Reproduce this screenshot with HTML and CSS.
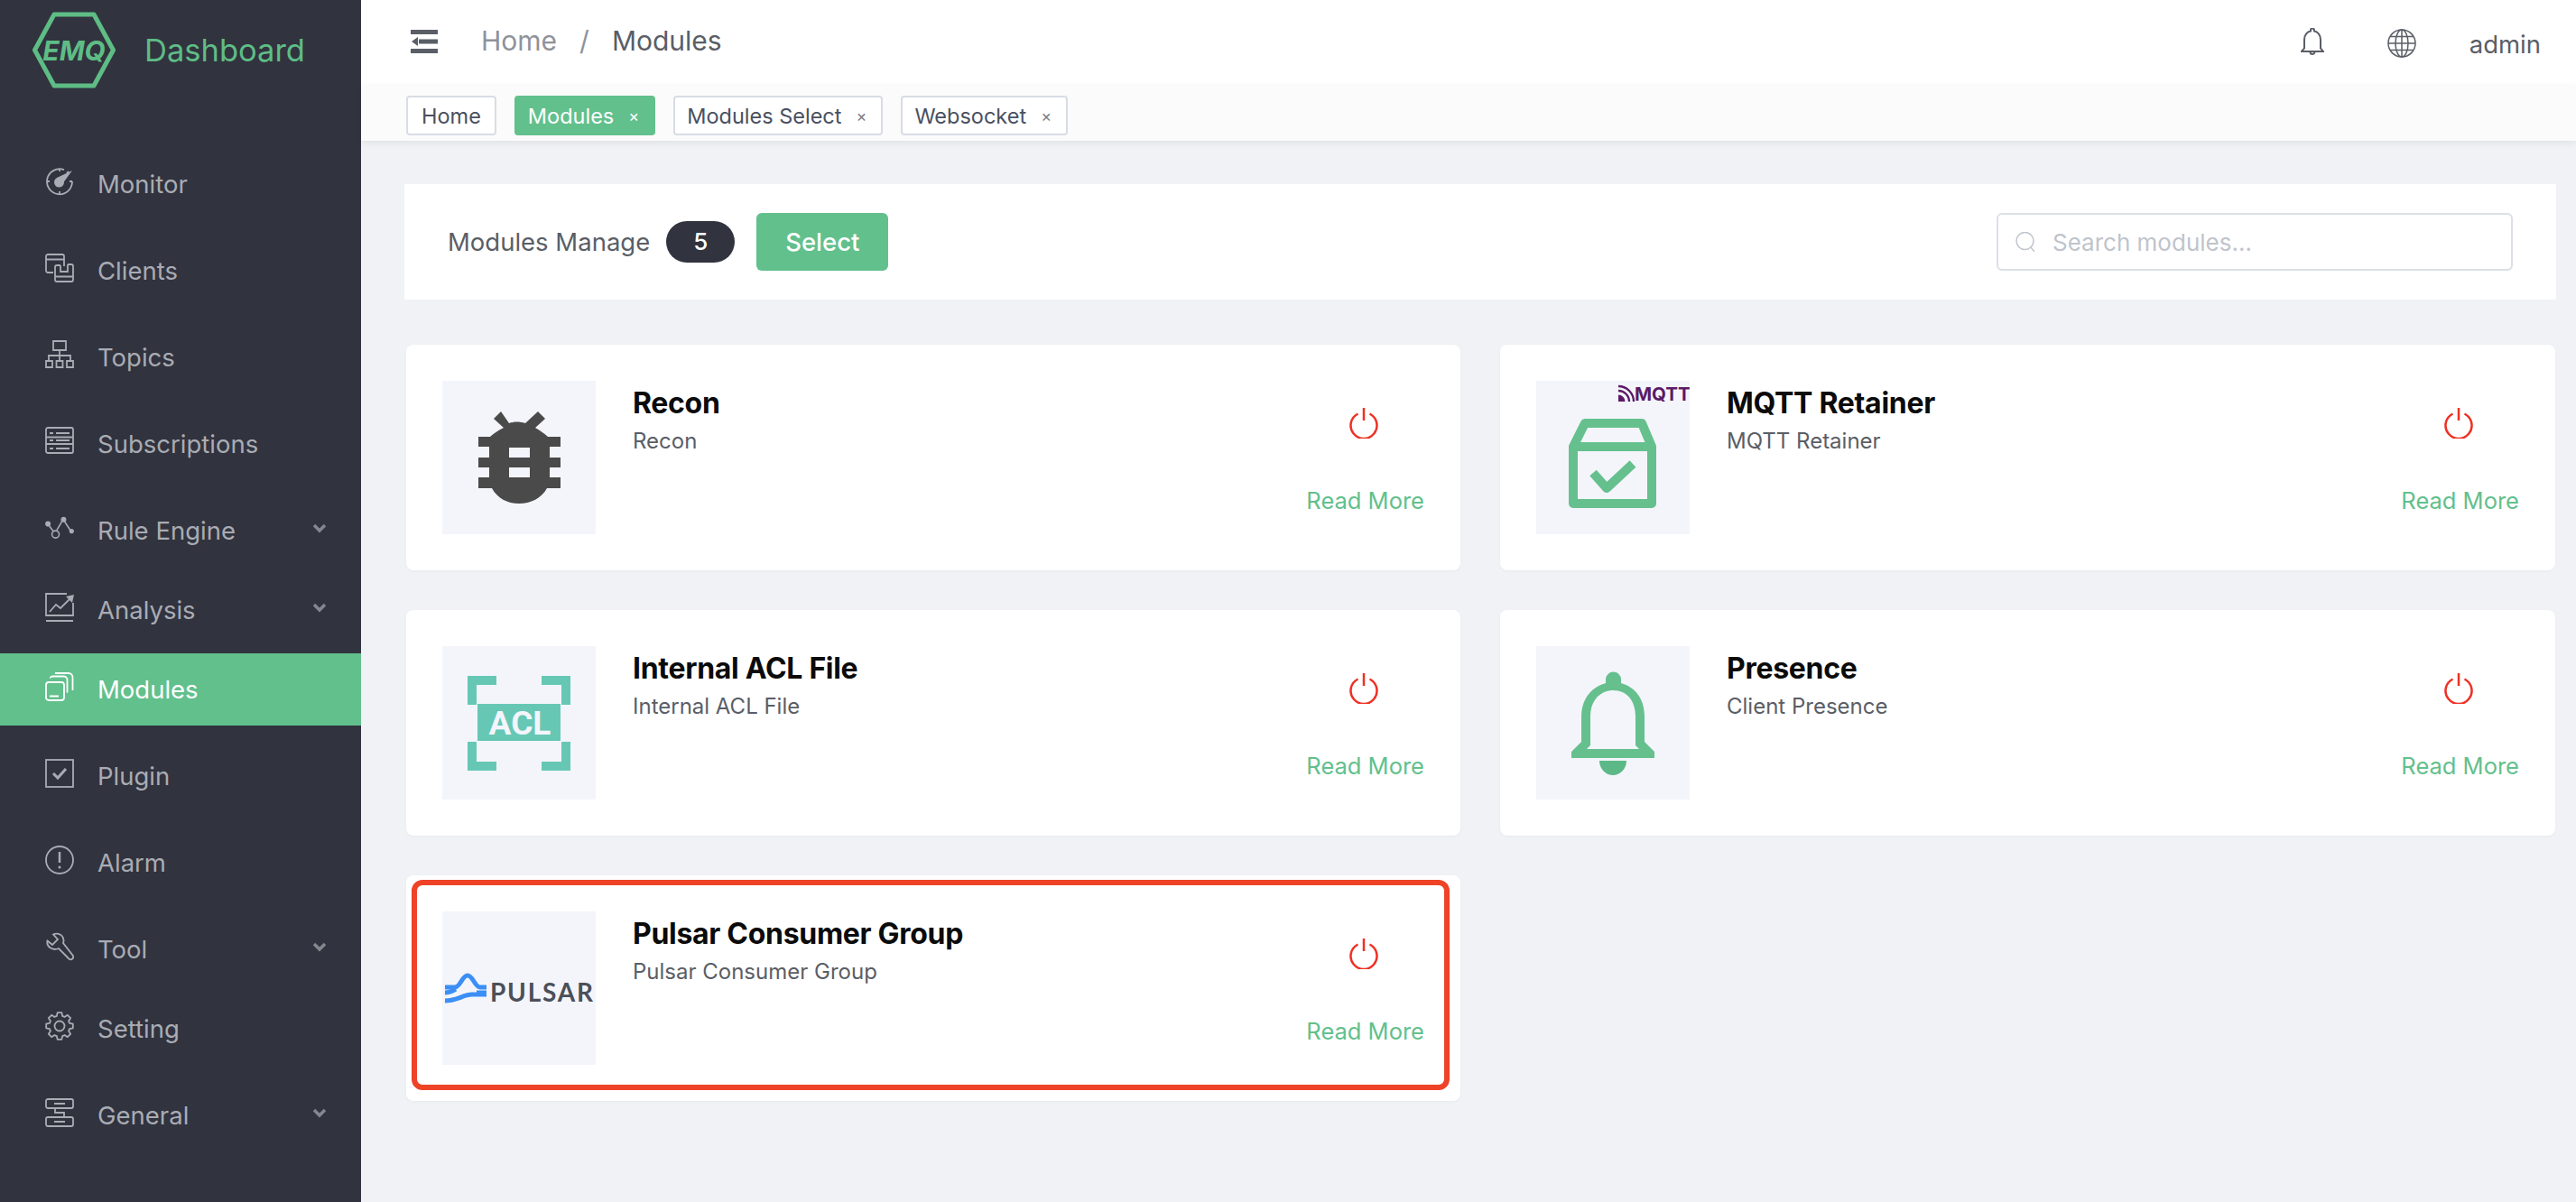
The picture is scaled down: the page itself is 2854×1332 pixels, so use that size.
FILE: index.html
```html
<!DOCTYPE html>
<html lang="en">
<head>
    <meta charset="UTF-8">
    <title>EMQ Dashboard</title>
    <link rel="stylesheet" href="styles.css">
</head>
<body>
    <aside class="sidebar">
        <div class="logo">
            <svg class="logo-hex" viewBox="0 0 92 85">
                <polygon points="2.5,42.5 24,3 68,3 89.5,42.5 68,82 24,82" fill="none" stroke="#5ebd85" stroke-width="5" stroke-linejoin="round"/>
                <text x="46" y="54" text-anchor="middle" class="logo-emq">EMQ</text>
            </svg>
            <span class="logo-text">Dashboard</span>
        </div>
        <nav class="menu">
            <a class="menu-item">
                <svg class="icon" viewBox="0 0 32 32">
                    <path d="M21 3.2A14 14 0 1 0 30 16"/>
                    <path d="M16 2v3M16 27v3M2 16h3M27 16h3M24 7l2-2"/>
                    <circle cx="15.5" cy="17" r="5.5" fill="currentColor" stroke="none"/>
                    <path d="M13 12L30 4l-11 15z" fill="currentColor" stroke="none"/>
                </svg>
                <span>Monitor</span>
            </a>
            <a class="menu-item">
                <svg class="icon" viewBox="0 0 32 32">
                    <path d="M9 21H3a2 2 0 0 1-2-2V3a2 2 0 0 1 2-2h16a2 2 0 0 1 2 2v11M1 6.500h20"/>
                    <path d="M11 15a2 2 0 0 1 2-2h4M25 12h4a2 2 0 0 1 2 2v15a2 2 0 0 1-2 2H13a2 2 0 0 1-2-2V15M11 25.500h20M17 13v7h8v-8"/>
                </svg>
                <span>Clients</span>
            </a>
            <a class="menu-item">
                <svg class="icon" viewBox="0 0 32 32">
                    <path d="M9 1h14v10H9zM16 11v6M4 23v-6h24v6M16 17v6"/>
                    <path d="M1 23h7v7H1zM12.500 23h7v7h-7zM24 23h7v7h-7z"/>
                </svg>
                <span>Topics</span>
            </a>
            <a class="menu-item">
                <svg class="icon" viewBox="0 0 32 32">
                    <rect x="1" y="1" width="30" height="28" rx="2"/>
                    <path d="M5 7h4M12 7h15M1 11.500h30M5 15h4M12 15h15M1 19h30M5 24h4M12 24h15"/>
                </svg>
                <span>Subscriptions</span>
            </a>
            <a class="menu-item has-sub">
                <svg class="icon" viewBox="0 0 36 28">
                    <path d="M4 10l6 8M14.500 17L22 4M23 4l9 14"/>
                    <circle cx="3.500" cy="9" r="2.500" fill="currentColor"/>
                    <circle cx="13" cy="22" r="4.500"/>
                    <circle cx="23" cy="3.500" r="2.500" fill="currentColor"/>
                    <circle cx="33" cy="18" r="2" fill="currentColor"/>
                </svg>
                <span>Rule Engine</span>
                <svg class="chevron" viewBox="0 0 16 12"><path d="M2 2l6 6 6-6"/></svg>
            </a>
            <a class="menu-item has-sub">
                <svg class="icon" viewBox="0 0 32 32">
                    <path d="M24 1H1v24h30V11M1 31h30"/>
                    <path d="M5 21l7-8 5 4 10-10"/>
                    <path d="M23 4l9-2-2 9z" fill="currentColor" stroke="none"/>
                </svg>
                <span>Analysis</span>
                <svg class="chevron" viewBox="0 0 16 12"><path d="M2 2l6 6 6-6"/></svg>
            </a>
            <a class="menu-item active">
                <svg class="icon" viewBox="0 0 32 32">
                    <rect x="1" y="11" width="20" height="20" rx="3"/>
                    <path d="M5.500 6.500a3 3 0 0 1 3-2h12a4 4 0 0 1 4 4v14M11 1h15a4.500 4.500 0 0 1 4.500 4.500V20M5 26.500h10"/>
                </svg>
                <span>Modules</span>
            </a>
            <a class="menu-item">
                <svg class="icon" viewBox="0 0 32 32">
                    <rect x="1" y="1" width="30" height="30"/>
                    <path d="M9 16l5 5 9-10" stroke-width="3"/>
                </svg>
                <span>Plugin</span>
            </a>
            <a class="menu-item">
                <svg class="icon" viewBox="0 0 32 32">
                    <circle cx="16" cy="16" r="15"/>
                    <path d="M16 7v12" stroke-width="2.500"/>
                    <circle cx="16" cy="24" r="1.500" fill="currentColor" stroke="none"/>
                </svg>
                <span>Alarm</span>
            </a>
            <a class="menu-item has-sub">
                <svg class="icon" viewBox="0 0 32 32">
                    <path d="M2.500 9.500L8 14l6-6-5-5.500C14 0 20 3 20.500 9c.1 1-.1 2-.5 3l10.500 13.500c1 1.500.8 3-.3 4-1.200 1.100-2.700 1-3.800 0L15 18c-7 3-14-2-12.500-8.500z"/>
                </svg>
                <span>Tool</span>
                <svg class="chevron" viewBox="0 0 16 12"><path d="M2 2l6 6 6-6"/></svg>
            </a>
            <a class="menu-item">
                <svg class="icon" viewBox="-16 -16 32 32">
                    <polygon stroke-linejoin="round" points="11.05,-3.170 14.820,-2.350 14.820,2.350 11.05,3.170 10.05,5.570 12.140,8.820 8.820,12.140 5.570,10.05 3.170,11.05 2.350,14.820 -2.350,14.820 -3.170,11.05 -5.570,10.05 -8.820,12.140 -12.140,8.820 -10.05,5.570 -11.05,3.170 -14.820,2.350 -14.820,-2.350 -11.05,-3.170 -10.05,-5.570 -12.140,-8.820 -8.820,-12.140 -5.570,-10.05 -3.170,-11.05 -2.350,-14.820 2.350,-14.820 3.170,-11.05 5.570,-10.05 8.820,-12.140 12.140,-8.820 10.05,-5.570"/>
                    <circle cx="0" cy="0" r="5.500"/>
                </svg>
                <span>Setting</span>
            </a>
            <a class="menu-item has-sub">
                <svg class="icon" viewBox="0 0 32 32">
                    <rect x="1" y="1" width="30" height="10" rx="2"/>
                    <rect x="1" y="21" width="30" height="10" rx="2"/>
                    <path d="M11 11v5h10v5M10 6h12M10 26h12"/>
                </svg>
                <span>General</span>
                <svg class="chevron" viewBox="0 0 16 12"><path d="M2 2l6 6 6-6"/></svg>
            </a>
        </nav>
    </aside>

    <div class="main">
        <header class="navbar">
            <svg class="hamburger" viewBox="0 0 30 26">
                <path d="M0 0h30v5H0zM0 21h30v5H0zM9 10.500h21v5H9zM1 13l7-5v10z"/>
            </svg>
            <div class="breadcrumb">
                <span class="crumb-link">Home</span>
                <span class="crumb-sep">/</span>
                <span class="crumb-current">Modules</span>
            </div>
            <div class="navbar-right">
                <svg class="nav-bell" viewBox="0 0 26 32">
                    <path d="M1 26l3-3.500V13C4 7.500 7.500 4 11 3.400V2.500a2 2 0 0 1 4 0v.9C18.500 4 22 7.500 22 13v9.500l3 3.500zM10.500 26.500a2.500 2.500 0 0 0 5 0"/>
                </svg>
                <svg class="nav-globe" viewBox="0 0 32 32">
                    <circle cx="16" cy="16" r="15"/>
                    <ellipse cx="16" cy="16" rx="7" ry="15"/>
                    <path d="M16 1v30M1 16h30M3.500 8.500h25M3.500 23.500h25"/>
                </svg>
                <span class="nav-user">admin</span>
            </div>
        </header>
        <div class="tags-bar">
            <span class="tag">Home</span>
            <span class="tag tag-closable tag-active">Modules<i>×</i></span>
            <span class="tag tag-closable">Modules Select<i>×</i></span>
            <span class="tag tag-closable">Websocket<i>×</i></span>
        </div>

        <section class="content">
            <div class="panel">
                <span class="panel-title">Modules Manage</span>
                <span class="badge">5</span>
                <button class="btn-select">Select</button>
                <label class="search">
                    <svg viewBox="0 0 22 22">
                        <circle cx="10.500" cy="10" r="9.500"/>
                        <path d="M17 17l4 5"/>
                    </svg>
                    <input type="text" placeholder="Search modules...">
                </label>
            </div>

            <div class="cards">
                <div class="card">
                    <div class="card-img">
                        <svg viewBox="0 0 170 170">
                            <path fill="#4a4a4a" fill-rule="evenodd" d="M65 34l-8 8 11 10c-6 3-11 6-15 10H40v11h12v12H40v11h12v11H40v12h15c6 11 17 17 30 17s25-6 31-17h15v-12h-12V96h12V85h-12V73h12V62h-14c-4-4-9-7-14-10l11-10-8-8-14 13c-6-2-13-2-18 0zM74 74h23v11H74zm0 22h23v11H74z"/>
                        </svg>
                    </div>
                    <div class="card-info">
                        <div class="card-title">Recon</div>
                        <div class="card-desc">Recon</div>
                    </div>
                    <div class="card-actions">
                        <svg class="power" viewBox="0 0 32 34"><path d="M9.500 6.500a14.500 14.500 0 1 0 13 0M16 0v14"/></svg>
                        <a class="read-more">Read More</a>
                    </div>
                </div>

                <div class="card">
                    <div class="card-img">
                        <svg viewBox="0 0 170 170">
                            <g fill="none" stroke="#66c08e" stroke-width="10" stroke-linejoin="round">
                                <path d="M41 73l13-26h63l11 26v63H41zM41 73h87"/>
                                <path d="M63 102l15 17 29-27"/>
                            </g>
                            <g fill="none" stroke="#5b1a66" stroke-width="2.400">
                                <path d="M91 6a17 17 0 0 1 17 17M91 11a12 12 0 0 1 12 12"/>
                            </g>
                            <path d="M91 15.500a7.500 7.500 0 0 1 7.500 7.500H91z" fill="#5b1a66"/>
                            <text x="109" y="21.500" class="mqtt-mark">MQTT</text>
                        </svg>
                    </div>
                    <div class="card-info">
                        <div class="card-title">MQTT Retainer</div>
                        <div class="card-desc">MQTT Retainer</div>
                    </div>
                    <div class="card-actions">
                        <svg class="power" viewBox="0 0 32 34"><path d="M9.500 6.500a14.500 14.500 0 1 0 13 0M16 0v14"/></svg>
                        <a class="read-more">Read More</a>
                    </div>
                </div>

                <div class="card">
                    <div class="card-img">
                        <svg viewBox="0 0 170 170">
                            <g fill="none" stroke="#66c8b4" stroke-width="10">
                                <path d="M33 65V38h27M110 38h27v27M33 106v27h27M110 133h27v-27"/>
                            </g>
                            <rect x="39" y="64" width="92" height="41" fill="#66c8b4"/>
                            <text x="86" y="98" text-anchor="middle" class="acl-mark">ACL</text>
                        </svg>
                    </div>
                    <div class="card-info">
                        <div class="card-title">Internal ACL File</div>
                        <div class="card-desc">Internal ACL File</div>
                    </div>
                    <div class="card-actions">
                        <svg class="power" viewBox="0 0 32 34"><path d="M9.500 6.500a14.500 14.500 0 1 0 13 0M16 0v14"/></svg>
                        <a class="read-more">Read More</a>
                    </div>
                </div>

                <div class="card">
                    <div class="card-img">
                        <svg viewBox="0 0 170 170">
                            <path fill="#66c08e" fill-rule="evenodd" d="M39 124v-7l11-11V78c0-20 12-33 27-37v-4a8.500 8.500 0 0 1 17 0v4c15 4 26 17 26 37v28l11 11v7zM56 114h58l-4-4V78c0-18-10-29-24.500-29S60 60 60 78v32z"/>
                            <path fill="#5cb987" d="M70 127h30a15 16 0 0 1-30 0z"/>
                        </svg>
                    </div>
                    <div class="card-info">
                        <div class="card-title">Presence</div>
                        <div class="card-desc">Client Presence</div>
                    </div>
                    <div class="card-actions">
                        <svg class="power" viewBox="0 0 32 34"><path d="M9.500 6.500a14.500 14.500 0 1 0 13 0M16 0v14"/></svg>
                        <a class="read-more">Read More</a>
                    </div>
                </div>

                <div class="card">
                    <div class="card-img">
                        <svg viewBox="0 0 170 170">
                            <g fill="none" stroke="#3b8ff5" stroke-width="5">
                                <path d="M3 84h11c6 0 8-13 14-13s8 13 14 13h7"/>
                                <path d="M3 90c4 0 7-1 12-4M38 90h11"/>
                                <path d="M3 99c14 0 20-7 30-7h16"/>
                            </g>
                            <text x="53" y="100" textLength="114" class="pulsar-mark">PULSAR</text>
                        </svg>
                    </div>
                    <div class="card-info">
                        <div class="card-title">Pulsar Consumer Group</div>
                        <div class="card-desc">Pulsar Consumer Group</div>
                    </div>
                    <div class="card-actions">
                        <svg class="power" viewBox="0 0 32 34"><path d="M9.500 6.500a14.500 14.500 0 1 0 13 0M16 0v14"/></svg>
                        <a class="read-more">Read More</a>
                    </div>
                    <div class="highlight"></div>
                </div>
            </div>
        </section>
    </div>
</body>
</html>
```

FILE: styles.css
```css
* {
    box-sizing: border-box;
}
html, body {
    height: 100%;
}
body {
    margin: 0;
    display: flex;
    overflow: hidden;
    font-family: Inter, "Noto Sans", sans-serif;
    background-color: #f0f2f6;
    color: #5a5e66;
}

/* sidebar */
.sidebar {
    width: 400px;
    flex-shrink: 0;
    background-color: #31333f;
}
.logo {
    height: 164px;
    padding: 13px 0 0 36px;
    display: flex;
    align-items: flex-start;
}
.logo-hex {
    width: 92px;
    height: 85px;
}
.logo-emq {
    font: italic 700 30px Inter, sans-serif;
    fill: #5ebd85;
}
.logo-text {
    margin-left: 32px;
    line-height: 85px;
    font-size: 34.5px;
    color: #5ebd85;
}
.menu-item {
    display: flex;
    align-items: center;
    height: 80px;
    margin-bottom: 16px;
    padding-left: 50px;
    font-size: 27.5px;
    color: #a9acb3;
}
.menu-item.has-sub {
    margin-bottom: 8px;
}
.menu-item.active {
    background-color: #62c08c;
    color: #fff;
}
.icon {
    width: 32px;
    height: 32px;
    margin-right: 26px;
    margin-top: -6px;
    fill: none;
    stroke: currentColor;
    stroke-width: 1.800;
    flex-shrink: 0;
}
.chevron {
    width: 16px;
    height: 12px;
    margin-left: auto;
    margin-right: 38px;
    margin-top: -4px;
    fill: none;
    stroke: #85878e;
    stroke-width: 3.500;
}

/* top bar */
.main {
    flex: 1;
    min-width: 0;
}
.navbar {
    height: 95px;
    display: flex;
    align-items: center;
    padding-left: 55px;
    padding-right: 39px;
    background-color: #fff;
}
.hamburger {
    width: 30px;
    height: 26px;
    margin-top: -4px;
    fill: #5a5e66;
}
.breadcrumb {
    margin-left: 48px;
    margin-top: -6px;
    font-size: 30px;
    display: flex;
}
.crumb-link {
    color: #8f9299;
}
.crumb-sep {
    margin: 0 25px;
    color: #8f9299;
}
.crumb-current {
    color: #5a5e66;
}
.navbar-right {
    margin-left: auto;
    display: flex;
    align-items: center;
}
.nav-bell {
    width: 26px;
    height: 32px;
    margin-top: -2px;
    fill: none;
    stroke: #5a5e66;
    stroke-width: 2;
}
.nav-globe {
    width: 32px;
    height: 32px;
    margin-left: 70px;
    fill: none;
    stroke: #5a5e66;
    stroke-width: 1.500;
}
.nav-user {
    margin-left: 59px;
    margin-top: 2px;
    font-size: 27.5px;
}
.tags-bar {
    height: 61px;
    display: flex;
    align-items: center;
    gap: 20px;
    padding: 5px 0 0 50px;
    background-color: #fbfbfb;
    box-shadow: 0 2px 8px rgba(0, 0, 0, 0.08);
    position: relative;
}
.tag {
    height: 44px;
    padding: 0 15px;
    display: flex;
    align-items: center;
    font-size: 23.5px;
    background-color: #fff;
    border: 2px solid #d8dce5;
    border-radius: 4px;
    color: #495060;
}
.tag-closable {
    padding-left: 13px;
}
.tag i {
    margin-left: 16px;
    padding-right: 1px;
    font-style: normal;
    font-size: 18px;
    color: #7d8087;
}
.tag-active {
    background-color: #62c08c;
    border-color: #62c08c;
    color: #fff;
}
.tag-active i {
    color: #fff;
}

/* content */
.content {
    padding: 48px 22px 0 48px;
}
.panel {
    height: 128px;
    display: flex;
    align-items: center;
    padding: 0 48px;
    background-color: #fff;
}
.panel-title {
    font-size: 27.5px;
}
.badge {
    width: 76px;
    height: 46px;
    margin-left: 18px;
    border-radius: 23px;
    background-color: #31333f;
    color: #fff;
    font-size: 26px;
    font-weight: 500;
    line-height: 46px;
    text-align: center;
}
.btn-select {
    width: 146px;
    height: 64px;
    margin-left: 24px;
    border: none;
    border-radius: 6px;
    background-color: #62c08c;
    color: #fff;
    font-family: inherit;
    font-size: 27.5px;
    font-weight: 500;
}
.search {
    width: 572px;
    height: 64px;
    margin-left: auto;
    display: flex;
    align-items: center;
    padding-left: 19px;
    border: 2px solid #dcdfe6;
    border-radius: 6px;
}
.search svg {
    width: 22px;
    height: 22px;
    fill: none;
    stroke: #c0c4cc;
    stroke-width: 1.500;
}
.search input {
    flex: 1;
    min-width: 0;
    margin-left: 17px;
    border: none;
    outline: none;
    background: transparent;
    font-family: inherit;
    font-size: 26px;
    color: #5a5e66;
}
.search input::placeholder {
    color: #c0c4cc;
}

/* cards */
.cards {
    display: grid;
    grid-template-columns: 1168px 1169px;
    gap: 44px;
    margin: 50px 0 0 2px;
}
.card {
    position: relative;
    height: 250px;
    display: flex;
    padding: 40px;
    background-color: #fff;
    border-radius: 8px;
    box-shadow: 0 1px 3px rgba(0, 0, 0, 0.04);
}
.card-img {
    width: 170px;
    height: 170px;
    flex-shrink: 0;
    background-color: #f4f5fb;
}
.card-img svg {
    display: block;
    width: 170px;
    height: 170px;
}
.mqtt-mark {
    font: 700 20.5px Inter, sans-serif;
    fill: #5b1a66;
}
.acl-mark {
    font: 700 37px Roboto, sans-serif;
    fill: #f4f5fb;
}
.pulsar-mark {
    font: 700 28px Lato, sans-serif;
    fill: #4b5058;
}
.card-info {
    margin-left: 41px;
    padding-top: 5px;
}
.card-title {
    font-size: 32px;
    font-weight: 700;
    letter-spacing: -0.3px;
    color: #0b0b0b;
    line-height: 40px;
}
.card-desc {
    margin-top: 3px;
    font-size: 24px;
    line-height: 38px;
    color: #5a5e66;
}
.card-actions {
    margin-left: auto;
    display: flex;
    flex-direction: column;
    align-items: center;
    padding-top: 30px;
}
.power {
    width: 32px;
    height: 34px;
    margin-right: 4px;
    fill: none;
    stroke: #ee3124;
    stroke-width: 2.500;
}
.read-more {
    margin-top: 53px;
    font-size: 25.5px;
    color: #62c08c;
}
.highlight {
    position: absolute;
    top: 5px;
    left: 6px;
    right: 12px;
    bottom: 12px;
    border: 6px solid #ee4327;
    border-radius: 12px;
}
```
